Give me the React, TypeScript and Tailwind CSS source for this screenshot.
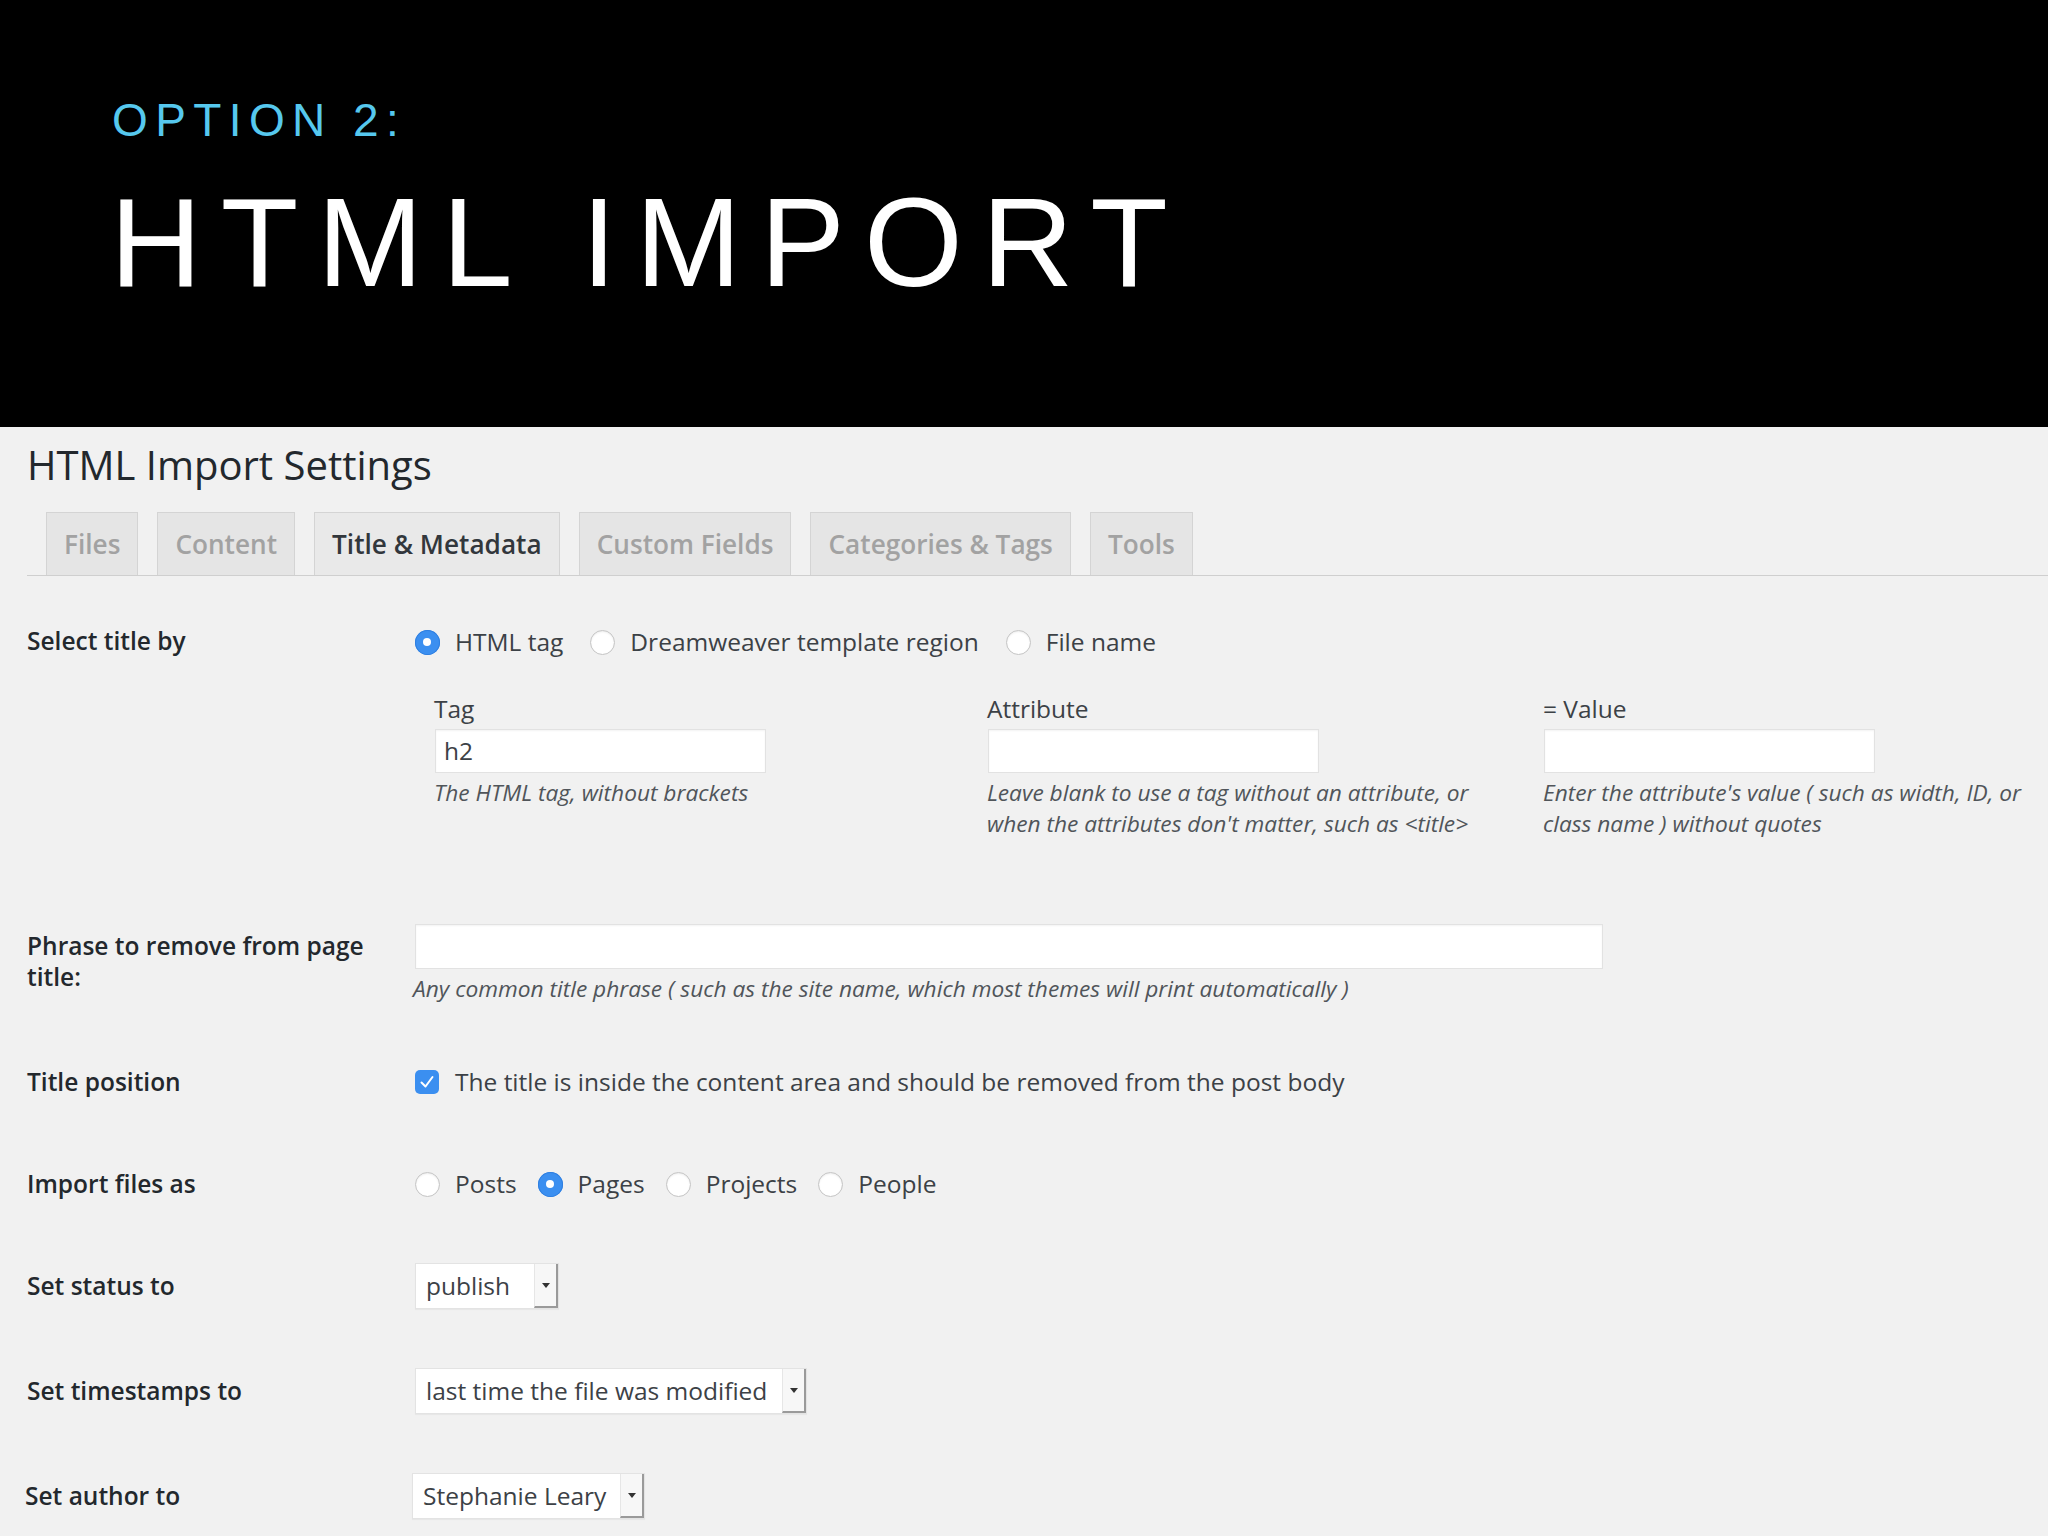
import React from "react";

const wp = { fontFamily: '"Open Sans", "Noto Sans", sans-serif' };

function Radio({ checked }: { checked?: boolean }) {
  return checked ? (
    <span className="w-[25px] h-[25px] rounded-full bg-[#3b8ff0] flex items-center justify-center shrink-0 shadow-[inset_0_0_0_1px_#2f7fe0]">
      <span className="w-[8px] h-[8px] rounded-full bg-white" />
    </span>
  ) : (
    <span className="w-[25px] h-[25px] rounded-full bg-white border border-[#c4c4c4] shrink-0 shadow-[inset_0_1px_2px_rgba(0,0,0,0.08)]" />
  );
}

function Choice({ label, checked, space }: { label: string; checked?: boolean; space: string }) {
  return (
    <label className={`flex items-center gap-[15px] ${space}`}>
      <Radio checked={checked} />
      <span>{label}</span>
    </label>
  );
}

function Select({ value, width }: { value: string; width: string }) {
  return (
    <div className={`${width} h-[46px] flex bg-white border border-[#e3e3e3] shadow-[0_1px_1px_rgba(0,0,0,0.04)]`}>
      <span className="flex-1 flex items-center pl-[10px] whitespace-nowrap">{value}</span>
      <span className="w-[24px] flex items-center justify-center bg-[#f7f7f7] border-r-2 border-b-2 border-[#9a9a9a] border-l border-l-[#e6e6e6]">
        <svg width="8" height="5" viewBox="0 0 8 5">
          <path d="M0 0h8L4 5z" fill="#333" />
        </svg>
      </span>
    </div>
  );
}

const tabs = ["Files", "Content", "Title & Metadata", "Custom Fields", "Categories & Tags", "Tools"];

export default function App() {
  return (
    <div className="w-[2048px] h-[1536px] overflow-hidden bg-[#f1f1f1]">
      {/* slide header */}
      <header
        className="h-[427px] bg-black pl-[112px] pt-[90px]"
        style={{ fontFamily: '"Liberation Sans", Arial, sans-serif' }}
      >
        <div className="text-[46px] leading-[60px] tracking-[7.4px] text-[#56c8ee]">OPTION 2:</div>
        <div className="text-[127px] leading-[140px] tracking-[19px] text-white mt-[22px] -ml-[2px]">HTML IMPORT</div>
      </header>

      <main className="px-[27px] text-[#3c4146] text-[24.5px]" style={wp}>
        <h2 className="text-[40px] leading-[52px] text-[#23282d] pt-[12px]">HTML Import Settings</h2>

        {/* tabs */}
        <nav className="mt-[21px] -mr-[27px] border-b border-[#cfcfcf] flex gap-[19px] pl-[19px] h-[64px] items-end">
          {tabs.map((t) => (
            <div
              key={t}
              className={`h-[63px] px-[17px] pt-[2px] flex items-center border border-b-0 border-[#d4d4d4] text-[26.2px] font-semibold ${
                t === "Title & Metadata" ? "text-[#32373c] bg-[#e9e9e9]" : "text-[#a2a2a2] bg-[#e5e5e5]"
              }`}
            >
              {t}
            </div>
          ))}
        </nav>

        <div>
          {/* select title by */}
          <div className="flex mt-[44px]">
            <div className="w-[388px] h-[42px] flex items-center font-semibold text-[#23282d]">Select title by</div>
            <div className="flex-1">
              <div className="h-[42px] flex items-center pt-[2px]">
                <Choice label="HTML tag" checked space="mr-[27px]" />
                <Choice label="Dreamweaver template region" space="mr-[27px]" />
                <Choice label="File name" space="mr-[27px]" />
              </div>
              <div className="grid grid-cols-[553px_556px_1fr] pl-[19px] mt-[31px]">
                {[
                  { l: "Tag", v: "h2", h: ["The HTML tag, without brackets"] },
                  {
                    l: "Attribute",
                    v: "",
                    h: ["Leave blank to use a tag without an attribute, or", "when the attributes don't matter, such as <title>"],
                  },
                  {
                    l: "= Value",
                    v: "",
                    h: ["Enter the attribute's value ( such as width, ID, or", "class name ) without quotes"],
                  },
                ].map((c) => (
                  <div key={c.l}>
                    <div className="leading-[32px]">{c.l}</div>
                    <div className="w-[331px] h-[44px] mt-[4px] ml-[1px] bg-white border border-[#e2e2e2] shadow-[inset_0_1px_2px_rgba(0,0,0,0.05)] flex items-center px-[8px]">
                      {c.v}
                    </div>
                    <div className="italic text-[22.7px] leading-[31px] mt-[4px] text-[#50555a] whitespace-nowrap">
                      {c.h.map((x) => (
                        <div key={x}>{x}</div>
                      ))}
                    </div>
                  </div>
                ))}
              </div>
            </div>
          </div>

          {/* phrase */}
          <div className="flex mt-[85px]">
            <div className="w-[388px] pt-[6px] leading-[31px] font-semibold text-[#23282d]">
              Phrase to remove from page
              <br />
              title:
            </div>
            <div className="flex-1">
              <div className="w-[1188px] h-[45px] bg-white border border-[#e2e2e2] shadow-[inset_0_1px_2px_rgba(0,0,0,0.05)]" />
              <div className="italic text-[22.7px] leading-[31px] mt-[4px] -ml-[2px] text-[#50555a]">
                Any common title phrase ( such as the site name, which most themes will print automatically )
              </div>
            </div>
          </div>

          {/* title position */}
          <div className="flex mt-[57px] h-[42px] items-center">
            <div className="w-[388px] font-semibold text-[#23282d]">Title position</div>
            <label className="flex items-center gap-[16px]">
              <span className="w-[24px] h-[24px] rounded-[5px] bg-[#3b8ff0] flex items-center justify-center">
                <svg width="16" height="14" viewBox="0 0 16 14">
                  <path d="M2.5 7.5l4 4 7-9.5" stroke="#fff" strokeWidth="2" fill="none" strokeLinecap="round" strokeLinejoin="round" />
                </svg>
              </span>
              <span>The title is inside the content area and should be removed from the post body</span>
            </label>
          </div>

          {/* import as */}
          <div className="flex mt-[60px] h-[42px] items-center">
            <div className="w-[388px] font-semibold text-[#23282d]">Import files as</div>
            <div className="flex items-center">
              <Choice label="Posts" space="mr-[21px]" />
              <Choice label="Pages" checked space="mr-[21px]" />
              <Choice label="Projects" space="mr-[21px]" />
              <Choice label="People" space="mr-[21px]" />
            </div>
          </div>

          {/* status */}
          <div className="flex mt-[58px] h-[46px] items-center">
            <div className="w-[388px] font-semibold text-[#23282d]">Set status to</div>
            <Select value="publish" width="w-[144px]" />
          </div>

          <div className="flex mt-[59px] h-[46px] items-center">
            <div className="w-[388px] font-semibold text-[#23282d]">Set timestamps to</div>
            <Select value="last time the file was modified" width="w-[392px]" />
          </div>

          <div className="flex mt-[59px] h-[46px] items-center">
            <div className="w-[387px] -ml-[2px] font-semibold text-[#23282d]">Set author to</div>
            <Select value="Stephanie Leary" width="w-[233px]" />
          </div>
        </div>
      </main>
    </div>
  );
}
